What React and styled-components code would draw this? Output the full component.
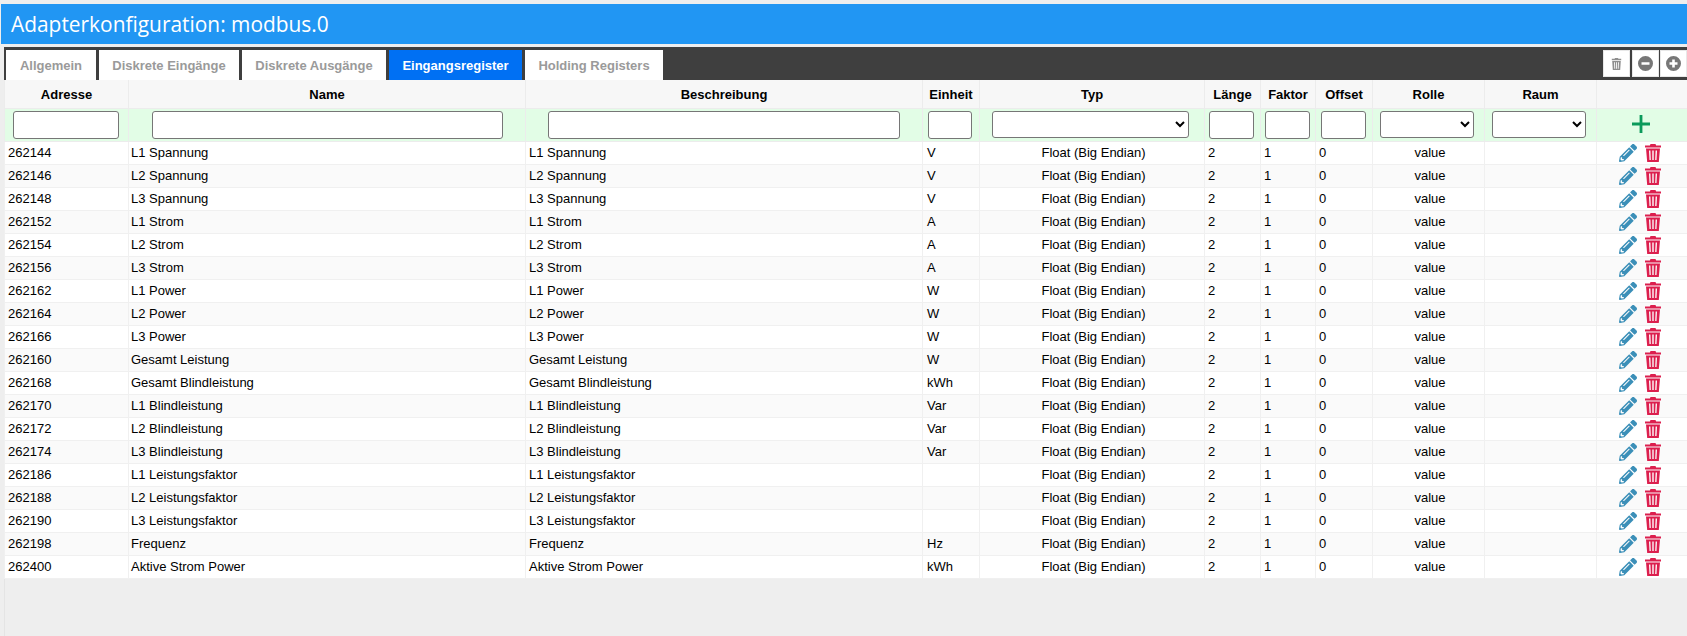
import React from 'react';
import styled, { createGlobalStyle } from 'styled-components';
import { FaPencilAlt } from 'react-icons/fa';

const GlobalStyle = createGlobalStyle`
  html, body {
    margin: 0;
    padding: 0;
    height: 100%;
    overflow: hidden;
    background: #eeeeee;
  }
  body {
    font-family: 'Liberation Sans', Arial, sans-serif;
    font-size: 13px;
    color: #000;
  }
`;

const Page = styled.div`
  display: flex;
  flex-direction: column;
  height: 636px;
  padding: 4px 0 0 1px;
  box-sizing: border-box;
`;

const TitleBar = styled.div`
  display: flex;
  align-items: center;
  height: 40px;
  padding-left: 10px;
  background: #2196f3;
  color: #fff;
  font-family: 'Open Sans', sans-serif;
  font-size: 20.9px;
  flex: none;
`;

const Panel = styled.div`
  display: flex;
  flex-direction: column;
  flex: 1;
  margin: 3px 0 0 3px;
  border-left: 1px solid #e4e4e4;
`;

const TabBar = styled.div`
  display: flex;
  justify-content: space-between;
  height: 33px;
  margin-left: -1px;
  padding: 3px 0 0 2px;
  box-sizing: border-box;
  background: #3f3f3f;
`;

const Tabs = styled.div`
  display: flex;
  gap: 3px;
`;

const Tab = styled.div`
  display: flex;
  align-items: center;
  justify-content: center;
  width: ${(p) => p.$w}px;
  background: ${(p) => (p.$active ? '#0070f3' : '#fff')};
  color: ${(p) => (p.$active ? '#fff' : '#9a9a9a')};
  font-weight: bold;
`;

const Tools = styled.div`
  display: flex;
  gap: 1px;
  height: 27px;
`;

const ToolButton = styled.div`
  display: flex;
  align-items: center;
  justify-content: center;
  width: 27px;
  margin-left: ${(p) => (p.$wide ? '1px' : '0')};
  background: #fff;
  border: 1px solid #e8e8e8;
  box-sizing: border-box;
  color: ${(p) => (p.$light ? '#8e8e8e' : '#777')};
`;

const Table = styled.table`
  table-layout: fixed;
  width: 1683px;
  margin-left: -1px;
  border-collapse: collapse;
  background: #fff;
`;

const HeadCell = styled.th`
  height: 28px;
  padding: 0;
  background: #f7f7f7;
  border: 1px solid #ececec;
  border-top: 0;
  font-weight: bold;
  font-size: 13px;
  text-align: center;
`;

const FilterRow = styled.tr`
  background: #e2fde6;
`;

const FilterCell = styled.td`
  height: 33px;
  padding: 2px ${(p) => p.$shift ?? 0}px 0 0;
  box-sizing: border-box;
  vertical-align: top;
  text-align: center;
  border: 1px solid #ececec;
  border-top: 0;
`;

const FilterInput = styled.input`
  display: block;
  width: ${(p) => p.$w}px;
  height: 28px;
  margin: 0 auto;
  padding: 0 4px;
  box-sizing: border-box;
  background: #fff;
  border: 1px solid #767676;
  border-radius: 3px;
`;

const FilterSelect = styled.select`
  display: block;
  width: ${(p) => p.$w}px;
  height: 27px;
  margin: 0 auto;
  box-sizing: border-box;
  background: #fff;
  border: 1px solid #767676;
  border-radius: 3px;
`;

const AddButton = styled.div`
  display: flex;
  justify-content: center;
  padding: 3px 2px 0 0;
  color: #0b9a5b;
`;

const Row = styled.tr`
  background: ${(p) => (p.$even ? '#fafafa' : '#fff')};
`;

const Cell = styled.td`
  height: 21px;
  padding: 0 0 1px ${(p) => p.$pad ?? 3}px;
  border: 1px solid #f0f0f0;
  font-size: 13px;
  line-height: 15px;
  white-space: nowrap;
  text-align: ${(p) => (p.$center ? 'center' : 'left')};
`;

const Actions = styled.div`
  display: flex;
  justify-content: center;
  align-items: center;
  gap: 8px;
  padding-right: 7px;
  color: #dc1f4e;
`;

const columns = [
  ['Adresse', 124],
  ['Name', 397],
  ['Beschreibung', 397],
  ['Einheit', 57],
  ['Typ', 225],
  ['Länge', 56],
  ['Faktor', 55],
  ['Offset', 57],
  ['Rolle', 112],
  ['Raum', 112],
  ['', 91],
];

const tabs = [
  ['Allgemein', 90],
  ['Diskrete Eingänge', 140],
  ['Diskrete Ausgänge', 144],
  ['Eingangsregister', 133],
  ['Holding Registers', 138],
];

const rows = [
  ['262144', 'L1 Spannung', 'V'],
  ['262146', 'L2 Spannung', 'V'],
  ['262148', 'L3 Spannung', 'V'],
  ['262152', 'L1 Strom', 'A'],
  ['262154', 'L2 Strom', 'A'],
  ['262156', 'L3 Strom', 'A'],
  ['262162', 'L1 Power', 'W'],
  ['262164', 'L2 Power', 'W'],
  ['262166', 'L3 Power', 'W'],
  ['262160', 'Gesamt Leistung', 'W'],
  ['262168', 'Gesamt Blindleistung', 'kWh'],
  ['262170', 'L1 Blindleistung', 'Var'],
  ['262172', 'L2 Blindleistung', 'Var'],
  ['262174', 'L3 Blindleistung', 'Var'],
  ['262186', 'L1 Leistungsfaktor', ''],
  ['262188', 'L2 Leistungsfaktor', ''],
  ['262190', 'L3 Leistungsfaktor', ''],
  ['262198', 'Frequenz', 'Hz'],
  ['262400', 'Aktive Strom Power', 'kWh'],
];

const TrashTool = () => (
  <svg width="11" height="12" viewBox="0 0 12 14" fill="currentColor">
    <path d="M4 0h4v1h3.500v1.500h-11V1H4zM1 3.500h10L10.300 14H1.700zM3.200 5l.3 7.500h1L4.200 5zM5.500 5v7.500h1V5zM7.800 5l-.3 7.500h1L8.800 5z" fillRule="evenodd" />
  </svg>
);

const CircleTool = ({ plus }) => (
  <svg width="15" height="15" viewBox="0 0 15 15" fill="currentColor">
    <path
      fillRule="evenodd"
      d={
        plus
          ? 'M7.500 0a7.500 7.500 0 1 0 0 15a7.500 7.500 0 0 0 0-15zM6.200 3.500h2.600v2.700h2.700v2.600H8.800v2.700H6.200V8.800H3.500V6.200h2.700z'
          : 'M7.500 0a7.500 7.500 0 1 0 0 15a7.500 7.500 0 0 0 0-15zM3.500 6.200h8v2.600h-8z'
      }
    />
  </svg>
);

const TrashIcon = () => (
  <svg width="16" height="18" viewBox="0 0 16 18" fill="currentColor">
    <path
      fillRule="evenodd"
      d="M5.500 0h5l.6 1.500H16v2H0v-2h4.900zM1 4.500h14L13.800 18H2.200zM4 6.500l.5 9.500h1.300L5.400 6.500zM7.300 6.500V16h1.400V6.500zM10.600 6.500l-.4 9.500h1.300l.5-9.500z"
    />
  </svg>
);

export default function App() {
  return (
    <Page>
      <GlobalStyle />
      <TitleBar>Adapterkonfiguration: modbus.0</TitleBar>
      <Panel>
        <TabBar>
          <Tabs>
            {tabs.map(([label, w], i) => (
              <Tab key={label} $w={w} $active={i === 3}>
                {label}
              </Tab>
            ))}
          </Tabs>
          <Tools>
            <ToolButton $light>
              <TrashTool />
            </ToolButton>
            <ToolButton $wide>
              <CircleTool />
            </ToolButton>
            <ToolButton>
              <CircleTool plus />
            </ToolButton>
          </Tools>
        </TabBar>
        <Table>
          <colgroup>
            {columns.map(([name, w], i) => (
              <col key={i} width={w} />
            ))}
          </colgroup>
          <thead>
            <tr>
              {columns.map(([name], i) => (
                <HeadCell key={i}>{name}</HeadCell>
              ))}
            </tr>
            <FilterRow>
              <FilterCell $shift={2}><FilterInput $w={106} /></FilterCell>
              <FilterCell><FilterInput $w={351} /></FilterCell>
              <FilterCell><FilterInput $w={352} /></FilterCell>
              <FilterCell $shift={2}><FilterInput $w={44} /></FilterCell>
              <FilterCell $shift={4}><FilterSelect $w={197} /></FilterCell>
              <FilterCell $shift={2}><FilterInput $w={45} /></FilterCell>
              <FilterCell $shift={2}><FilterInput $w={45} /></FilterCell>
              <FilterCell $shift={2}><FilterInput $w={45} /></FilterCell>
              <FilterCell $shift={4}><FilterSelect $w={94} /></FilterCell>
              <FilterCell $shift={4}><FilterSelect $w={94} /></FilterCell>
              <FilterCell>
                <AddButton>
                  <svg width="20" height="20" viewBox="0 0 20 20" fill="currentColor">
                    <path d="M8.600 1h2.800v7.600H19v2.800h-7.600V19H8.600v-7.600H1V8.600h7.600z" />
                  </svg>
                </AddButton>
              </FilterCell>
            </FilterRow>
          </thead>
          <tbody>
            {rows.map(([addr, name, unit], i) => (
              <Row key={addr} $even={i % 2 === 1}>
                <Cell>{addr}</Cell>
                <Cell $pad={2}>{name}</Cell>
                <Cell>{name}</Cell>
                <Cell $pad={4}>{unit}</Cell>
                <Cell $center>Float (Big Endian)</Cell>
                <Cell>2</Cell>
                <Cell>1</Cell>
                <Cell>0</Cell>
                <Cell $center>value</Cell>
                <Cell />
                <Cell>
                  <Actions>
                    <FaPencilAlt size={18} color="#3b8fb8" />
                    <TrashIcon />
                  </Actions>
                </Cell>
              </Row>
            ))}
          </tbody>
        </Table>
      </Panel>
    </Page>
  );
}
